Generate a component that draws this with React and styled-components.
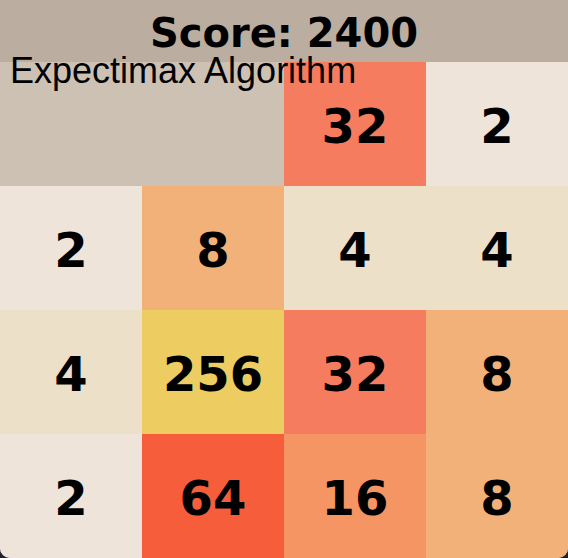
import React from "react";
import styled, { createGlobalStyle } from "styled-components";

const GlobalStyle = createGlobalStyle`
  * { box-sizing: border-box; }
  body { margin: 0; background: #202127; }
`;

const Game = styled.main`
  display: flex;
  flex-direction: column;
  min-height: 100vh;
  overflow: hidden;
  border-radius: 0 0 10px 10px;
  background: #cdc1b4;
  color: #000;
  font-family: Verdana, "DejaVu Sans", sans-serif;
  font-weight: 700;
`;

const Header = styled.header`
  position: relative;
  display: flex;
  flex: 0 0 auto;
  justify-content: center;
  align-items: center;
  height: 62px;
  padding-top: 4px;
  background: #bbada0;
`;

const Score = styled.h1`
  margin: 0;
  font-size: 40px;
  line-height: 48px;
`;

const AlgorithmLabel = styled.p`
  position: absolute;
  top: 50px;
  left: 10px;
  margin: 0;
  font: 400 36px/42px "Liberation Sans", Arial, sans-serif;
  white-space: nowrap;
`;

const Board = styled.section`
  display: grid;
  flex: 1;
  grid-template-columns: repeat(4, 1fr);
  grid-template-rows: repeat(4, 1fr);
`;

const tileColors = {
  0: "#cdc1b4",
  2: "#eee4da",
  4: "#ede0c8",
  8: "#f2b179",
  16: "#f59563",
  32: "#f67c5f",
  64: "#f65e3b",
  256: "#edcc61",
};

const Tile = styled.div`
  display: flex;
  align-items: center;
  justify-content: center;
  padding-top: 4px;
  background: ${({ $value }) => tileColors[$value]};
  font-size: 48px;
  line-height: 56px;
`;

const tiles = [0, 0, 32, 2, 2, 8, 4, 4, 4, 256, 32, 8, 2, 64, 16, 8];

export default function App() {
  return (
    <>
      <GlobalStyle />
      <Game>
        <Header>
          <Score>Score: 2400</Score>
          <AlgorithmLabel>Expectimax Algorithm</AlgorithmLabel>
        </Header>
        <Board aria-label="Game board">
          {tiles.map((value, index) => (
            <Tile key={index} $value={value}>{value || null}</Tile>
          ))}
        </Board>
      </Game>
    </>
  );
}
